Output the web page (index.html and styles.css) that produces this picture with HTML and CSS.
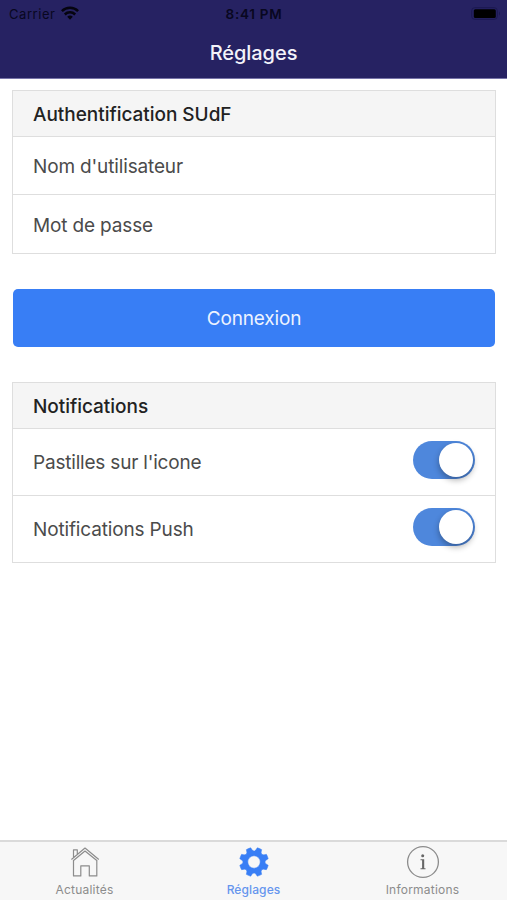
FILE: index.html
```html
<!DOCTYPE html>
<html lang="fr">
<head>
<meta charset="utf-8">
<title>Réglages</title>
<link rel="stylesheet" href="styles.css">
</head>
<body>
<header class="header">
  <div class="status">
    <div class="carrier"><span class="carrier-name">Carrier</span>
      <svg class="wifi" viewBox="0 0 18 14" width="18" height="14"><g fill="none" stroke="currentColor" stroke-width="2.5"><path d="M.9 5.1a11.5 11.5 0 0 1 16.2 0"/><path d="M3.8 8.5a7.4 7.4 0 0 1 10.4 0"/></g><path fill="currentColor" d="M6.2 10.8a4 4 0 0 1 5.6 0L9 13.8z"/></svg>
    </div>
    <span class="time">8:41 PM</span>
    <svg class="battery" viewBox="0 0 30 13" width="30" height="13"><rect x=".7" y=".7" width="25.6" height="11.6" rx="3" fill="none" stroke="#1b1850"/><rect x="2.8" y="2.2" width="22" height="8.8" rx="1.5" fill="#000"/><path d="M28 4.5q2 1.8 0 4z" fill="#1b1850"/></svg>
  </div>
  <h1 class="title">Réglages</h1>
</header>
<main class="content">
  <section class="card login">
    <h2 class="card-title">Authentification SUdF</h2>
    <div class="row field">Nom d'utilisateur</div>
    <div class="row field">Mot de passe</div>
  </section>
  <button class="submit">Connexion</button>
  <section class="card">
    <h2 class="card-title">Notifications</h2>
    <div class="row option"><span class="badge-label">Pastilles sur l'icone</span><span class="toggle"></span></div>
    <div class="row option"><span>Notifications Push</span><span class="toggle"></span></div>
  </section>
</main>
<nav class="tabs">
  <a class="tab">
    <svg viewBox="0 0 34 34" width="34" height="34" fill="none" stroke="currentColor" stroke-width="1.2" stroke-linejoin="round"><path d="M3.4 14.5 17 3l13.8 11.5M5.5 15.5 17 6l11.8 9.5M5.5 12.7V4.8h3.8v4.7M5.5 15v15.9h7.3V20.8h8.5v10.1h7.5V15"/></svg>
    <span>Actualités</span>
  </a>
  <a class="tab active">
    <svg viewBox="-17 -17 34 34" width="34" height="34" fill="currentColor"><path fill-rule="evenodd" stroke="currentColor" stroke-width=".5" stroke-linejoin="round" d="M14.2 3.3A14.8 14.8 0 0 1 12.37 7.7Q5.4 5.4 7.7 12.37A14.8 14.8 0 0 1 3.3 14.2Q0 7.6-3.3 14.2A14.8 14.8 0 0 1-7.7 12.37Q-5.4 5.4-12.37 7.7A14.8 14.8 0 0 1-14.2 3.3Q-7.6 0-14.2-3.3A14.8 14.8 0 0 1-12.37-7.7Q-5.4-5.4-7.7-12.37A14.8 14.8 0 0 1-3.3-14.2Q0-7.6 3.3-14.2A14.8 14.8 0 0 1 7.7-12.37Q5.4-5.4 12.37-7.7A14.8 14.8 0 0 1 14.2-3.3Q7.6 0 14.2 3.3ZM6.2 0A6.2 6.2 0 1 0-6.2 0A6.2 6.2 0 1 0 6.2 0Z"/></svg>
    <span>Réglages</span>
  </a>
  <a class="tab info">
    <svg viewBox="0 0 34 34" width="34" height="34"><circle cx="17" cy="17" r="15.4" fill="none" stroke="currentColor" stroke-width="1.3"/><circle cx="16.7" cy="10.7" r="1.5" fill="#666"/><path d="M14.5 14.3h3.7v9h1.3v1h-5v-1h1.6v-8h-1.6z" fill="#666"/></svg>
    <span>Informations</span>
  </a>
</nav>
</body>
</html>
```
FILE: styles.css
```css
* { box-sizing: border-box; }
body {
  margin: 0;
  height: 900px;
  display: flex;
  flex-direction: column;
  overflow: hidden;
  background: #fff;
  color: #4b4b4b;
  font-family: Inter, "Liberation Sans", sans-serif;
  font-size: 19px;
  letter-spacing: -.15px;
}
.header {
  height: 79px;
  background: #262262;
  border-bottom: 1px solid #7774a8;
}
.status {
  height: 27px;
  padding: 0 6px 0 9px;
  display: grid;
  grid-template-columns: 1fr auto 1fr;
  align-items: center;
  color: #080720;
  font-size: 13px;
}
.carrier { display: flex; align-items: center; gap: 6px; }
.carrier-name { letter-spacing: .55px; }
.wifi { margin-top: -2px; color: #05040f; }
.time { font-size: 13.5px; font-weight: 600; letter-spacing: .75px; margin: 0 0 0 -2px; }
.battery { justify-self: end; }
.title {
  margin: 0;
  text-align: center;
  color: #f3f3fa;
  font-size: 20px;
  letter-spacing: -.05px;
  line-height: 52px;
  font-weight: 500;
}
.content { flex: 1; padding: 11px 11px 0 12px; }
.card { border: 1px solid #dedede; }
.card-title {
  margin: 0;
  height: 45px;
  padding-left: 20px;
  background: #f5f5f5;
  color: #222;
  font-size: 19px;
  letter-spacing: -.03px;
  line-height: 47px;
  font-weight: 500;
}
.row {
  display: flex;
  align-items: center;
  justify-content: space-between;
  padding: 0 20px;
  border-top: 1px solid #dedede;
}
.field { height: 58px; padding-top: 2px; }
.field + .field { height: 59px; }
.option { height: 67px; }
.option span:first-child { padding-top: 1px; }
.option .badge-label { letter-spacing: -.2px; }
.submit {
  display: block;
  width: calc(100% - 2px);
  height: 58px;
  margin: 35px 1px;
  padding: 1px 0 0;
  border: 0;
  border-radius: 5px;
  background: #387ef5;
  color: #edf3ff;
  font: inherit;
  letter-spacing: -.15px;
}
.toggle {
  width: 62px;
  height: 38px;
  padding: 2px;
  display: flex;
  justify-content: flex-end;
  border-radius: 19px;
  background: #4e87dc;
  margin-top: -5px;
}
.toggle::after {
  content: "";
  width: 34px;
  height: 34px;
  border-radius: 50%;
  background: #fff;
  box-shadow: 0 3px 6px rgba(0, 0, 0, .32);
}
.tabs {
  height: 60px;
  padding-top: 3px;
  display: grid;
  grid-template-columns: repeat(3, 1fr);
  background: #f7f7f7;
  border-top: 2px solid #dadada;
  color: #8c8c8c;
  font-size: 12px;
}
.tab {
  display: flex;
  flex-direction: column;
  align-items: center;
  line-height: 22px;
  letter-spacing: .22px;
}
.active { color: #387ef5; }
.active span { color: #6595ee; font-weight: 500; letter-spacing: .1px; }
```
